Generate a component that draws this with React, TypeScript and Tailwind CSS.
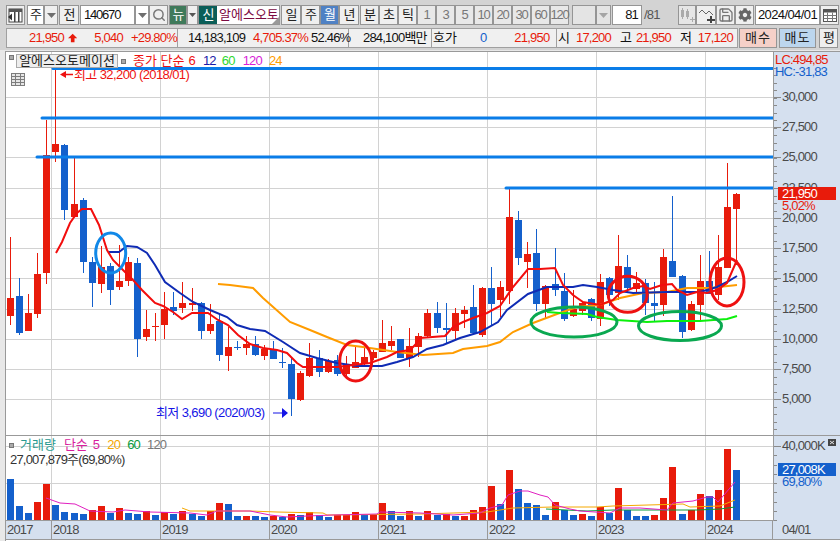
import React from "react";
import { Search, Save } from "lucide-react";
import { FaCog } from "react-icons/fa";

type Candle = [number, number, number, number, "r" | "b"];
const candles: Candle[] = [
  [237,298,316,325,"r"],[278,296,333,335,"b"],[294,313,331,331,"r"],[253,274,314,318,"r"],[120,155,273,284,"r"],
  [68,144,152,162,"r"],[144,145,210,220,"b"],[158,204,217,217,"r"],[198,200,262,273,"b"],[257,262,283,307,"b"],
  [246,267,284,293,"r"],[263,266,290,305,"b"],[245,281,287,290,"r"],[257,262,281,286,"r"],[258,263,339,357,"b"],
  [310,329,337,341,"r"],[313,326,327,341,"r"],[292,309,325,339,"r"],[292,307,311,315,"b"],[282,303,308,313,"r"],
  [288,303,305,311,"r"],[302,303,331,339,"b"],[304,324,331,334,"r"],[314,321,355,361,"b"],[327,347,356,371,"r"],
  [341,347,348,350,"b"],[336,344,348,355,"r"],[336,344,355,356,"b"],[345,349,356,360,"r"],[341,349,359,359,"b"],
  [348,362,363,368,"b"],[357,364,399,416,"b"],[371,373,400,401,"r"],[343,358,376,377,"r"],[350,358,372,377,"b"],
  [359,361,372,373,"r"],[355,360,374,376,"b"],[356,364,374,378,"r"],[347,362,368,367,"r"],[348,357,363,365,"r"],
  [350,352,358,360,"r"],[320,343,352,352,"r"],[326,341,346,350,"r"],[339,339,358,358,"b"],[328,346,358,367,"r"],
  [333,336,347,357,"r"],[309,313,336,337,"r"],[302,313,328,333,"b"],[303,328,330,343,"b"],[308,313,331,340,"r"],
  [306,310,314,328,"r"],[285,307,333,333,"b"],[287,288,335,337,"r"],[267,288,304,325,"b"],[281,287,300,317,"r"],
  [189,217,291,304,"r"],[211,220,258,265,"b"],[242,254,262,288,"r"],[229,253,304,311,"b"],[285,286,304,318,"r"],
  [248,284,290,296,"b"],[273,291,319,321,"b"],[290,309,316,317,"r"],[301,303,311,315,"r"],[298,299,318,321,"b"],
  [274,282,319,326,"r"],[277,278,295,306,"b"],[235,266,293,300,"r"],[255,267,288,293,"b"],[272,283,289,293,"r"],
  [279,283,303,315,"b"],[282,303,306,321,"b"],[249,257,305,316,"r"],[196,261,277,277,"b"],[275,276,332,338,"b"],
  [301,304,330,331,"r"],[255,281,305,320,"r"],[251,281,294,294,"b"],[235,267,295,300,"r"],[163,207,268,268,"r"],
  [193,194,209,265,"r"],
];
const volumes: [number, "r" | "b"][] = [
  [479,"b"],[506,"b"],[513,"b"],[502,"r"],[484,"r"],[505,"b"],[512,"b"],[513,"b"],[514,"b"],[510,"r"],
  [506,"r"],[513,"b"],[508,"r"],[513,"b"],[514,"b"],[511,"r"],[515,"b"],[512,"r"],[514,"b"],[511,"r"],
  [514,"b"],[516,"b"],[511,"r"],[503,"r"],[504,"b"],[516,"b"],[516,"r"],[516,"b"],[517,"b"],[516,"r"],
  [517,"b"],[514,"r"],[515,"b"],[512,"r"],[515,"b"],[517,"b"],[515,"r"],[515,"r"],[512,"r"],[515,"b"],
  [514,"r"],[503,"r"],[511,"b"],[516,"b"],[511,"r"],[516,"b"],[511,"r"],[515,"b"],[514,"r"],[516,"b"],
  [516,"r"],[510,"r"],[507,"r"],[486,"r"],[504,"b"],[470,"r"],[489,"b"],[503,"b"],[505,"b"],[515,"b"],
  [502,"r"],[510,"b"],[515,"b"],[514,"r"],[516,"b"],[507,"r"],[513,"b"],[488,"r"],[510,"b"],[516,"b"],
  [516,"b"],[515,"r"],[498,"r"],[467,"r"],[514,"b"],[510,"r"],[494,"r"],[496,"b"],[490,"r"],[449,"r"],[470,"b"],
];
const ma6 = "56,253 62,242 70,223 77,213 82,209 91,209 99,225 107,250 113,260 125,272 133,280 142,290 150,298 155,303 163,306 173,312 182,319 192,313 208,313 218,320 228,325 238,335 250,344 263,348 277,350 287,353 297,363 303,367 337,367 353,365 370,363 387,357 397,352 410,350 415,345 420,338 445,336 453,327 463,322 473,318 487,313 500,306 513,287 528,269 540,269 555,268 563,285 573,295 583,302 600,305 613,300 620,293 633,288 643,286 650,289 662,285 672,284 677,290 687,295 697,292 707,293 717,290 727,283 737,260";
const ma12 = "109,252 119,252 127,246 137,247 147,253 155,265 165,282 180,293 193,302 210,310 227,317 237,325 250,329 265,331 283,342 300,353 317,358 337,363 357,366 382,366 397,362 413,357 427,349 443,345 460,338 480,332 498,322 507,310 528,294 547,287 573,287 583,285 597,287 613,290 633,293 667,292 700,292 717,287 727,282 737,276";
const ma24 = "218,284 230,285 253,288 263,298 290,322 310,330 327,337 347,345 363,347 397,352 423,355 453,353 463,349 487,346 500,342 513,332 533,323 557,314 577,307 600,305 620,298 643,293 667,292 687,288 710,288 737,285";
const ma60 = "547,312 560,313 587,314 597,317 617,320 647,322 667,321 700,321 727,319 737,316";
const vma5 = "46,498 60,503 75,504 90,511 113,512 125,510 150,512 190,513 207,515 217,511 250,511 270,515 287,517 307,516 333,515 377,514 380,512 420,513 453,515 480,513 490,508 502,505 508,495 520,491 528,491 540,495 548,497 555,505 570,509 580,511 610,513 620,508 640,508 667,510 673,503 693,501 707,497 713,497 718,502 735,482";
const vma20 = "182,508 190,511 250,511 277,512 323,513 327,515 420,514 487,512 513,508 553,507 597,507 613,506 683,504 690,507 720,506 735,500";
const vma60 = "546,509 587,511 613,510 697,510 720,509 735,507";

const RED = "#e81b0b";
const BLUE = "#1460cc";
const gridX = [51.5, 160.5, 269.5, 378.5, 487.5, 596.5, 705.5];
const gridY = [97.5, 127.5, 157.5, 188, 218, 248, 278, 309, 339, 369, 399];
const prices: [string, number][] = [["30,000",96],["27,500",126],["25,000",156],["22,500",186.5],["20,000",217],["17,500",247],["15,000",277],["12,500",307.5],["10,000",338],["7,500",368],["5,000",398]];
const left = (i: number) => Math.round(10.5 + 9.075 * i - 3.5);

const Tri = () => (
  <svg width="9" height="5" viewBox="0 0 9 5"><polygon points="0,0 9,0 4.5,5" fill="#6e6e6e" /></svg>
);
const Btn = ({ w, children, cls = "", bg = "bg-[#efefef]", tc = "text-[#222]" }: { w: string; children?: React.ReactNode; cls?: string; bg?: string; tc?: string }) => (
  <div className={`${w} ${bg} ${tc} h-[20px] shrink-0 flex items-center justify-center border border-[#959595] whitespace-nowrap ${cls}`}>{children}</div>
);
const Num = ({ c = "text-[#e81b0b]", cls = "", children }: { c?: string; cls?: string; children: React.ReactNode }) => (
  <span className={`${c} ${cls} whitespace-pre`}>{children}</span>
);

function PriceChart() {
  return (
    <svg width="767" height="383" viewBox="6 52 767 383" className="block shrink-0 bg-white" fontSize="13" letterSpacing="-0.6">
      {gridX.map((x) => <rect key={x} x={x - 0.5} y={52} width={1} height={383} fill="#d2d2d2" />)}
      {gridY.map((y) => <rect key={y} x={6} y={Math.floor(y)} width={767} height={1} fill="#d2d2d2" />)}
      <g shapeRendering="crispEdges">
        {candles.map(([h, t, b, l, c], i) => (
          <g key={i} fill={c === "r" ? RED : BLUE}>
            <rect x={left(i) + 3} y={h} width={1} height={l - h} />
            <rect x={left(i)} y={t} width={7} height={Math.max(b - t, 1)} />
          </g>
        ))}
      </g>
      <polyline points={ma24} fill="none" stroke="#ff9c00" strokeWidth="2" />
      <polyline points={ma60} fill="none" stroke="#0cf00c" strokeWidth="2" />
      <polyline points={ma12} fill="none" stroke="#0f2bb4" strokeWidth="2" />
      <polyline points={ma6} fill="none" stroke="#f20d0d" strokeWidth="2" />
      <g fill="none" strokeWidth="3">
        <ellipse cx="110.7" cy="253" rx="15" ry="20" stroke="#1088e8" />
        <ellipse cx="355.7" cy="361" rx="16" ry="20" stroke="#ee1111" />
        <ellipse cx="574" cy="322" rx="43" ry="15" stroke="#0aa850" />
        <ellipse cx="627.7" cy="294.3" rx="19.5" ry="18" stroke="#ee1111" />
        <ellipse cx="680" cy="326" rx="41.5" ry="14.5" stroke="#0aa850" />
        <ellipse cx="727" cy="282" rx="17" ry="24" stroke="#ee1111" />
      </g>
      <text x="74" y="79" fill="#ee1111">최고 32,200 (2018/01)</text>
      <path d="M60 74.5 L66 71 L66 73.8 L73 73.8 L73 75.2 L66 75.2 L66 78 Z" fill="#ee1111" />
      <g stroke="#0a7de8" strokeWidth="3" strokeLinecap="round">
        <line x1="53" y1="68.5" x2="773" y2="68.5" />
        <line x1="42" y1="118" x2="773" y2="118" />
        <line x1="37" y1="157" x2="773" y2="157" />
        <line x1="506" y1="188" x2="773" y2="188" />
      </g>
      <text x="156" y="417" fill="#1414e6">최저 3,690 (2020/03)</text>
      <path d="M273 412.5 H282 V408 L288 413 L282 418 V413.5 H273 Z" fill="#1414e6" />
      <g stroke="#7d7d7d" fill="#e6e6e6">
        <rect x="11.5" y="73.5" width="13" height="12" />
        <path d="M11.5 76.5H24.5M11.5 79.5H24.5M11.5 82.5H24.5M15.5 73.5V85.5M20.5 73.5V85.5" fill="none" />
      </g>
    </svg>
  );
}

function VolumeChart() {
  return (
    <svg width="767" height="85" viewBox="6 436 767 85" className="block shrink-0 bg-white">
      {gridX.map((x) => <rect key={x} x={x - 0.5} y={436} width={1} height={85} fill="#d2d2d2" />)}
      <rect x={6} y={446} width={767} height={1} fill="#d2d2d2" />
      <rect x={6} y={483} width={767} height={1} fill="#d2d2d2" />
      <rect x={6} y={520} width={767} height={1} fill="#9a9a9a" />
      <g shapeRendering="crispEdges">
        {volumes.map(([t, c], i) => <rect key={i} x={left(i)} y={t} width={7} height={520 - t} fill={c === "r" ? RED : BLUE} />)}
      </g>
      <polyline points={vma60} fill="none" stroke="#0a9a3c" strokeWidth="1" />
      <polyline points={vma20} fill="none" stroke="#f5a800" strokeWidth="1" />
      <polyline points={vma5} fill="none" stroke="#e020c0" strokeWidth="1" />
    </svg>
  );
}

function PriceAxis() {
  const ticks: number[] = [];
  for (let y = 67.5; y < 432; y += 7.54) ticks.push(Math.round(y));
  return (
    <svg width="67" height="383" viewBox="773 52 67 383" className="block shrink-0 bg-[#d5e0ef]" fontSize="13" letterSpacing="-0.8">
      <rect x="773" y="52" width="1" height="383" fill="#9a9a9a" />
      {ticks.map((y) => <rect key={y} x="774" y={y} width="3" height="1" fill="#8a8a8a" />)}
      {gridY.map((y) => <rect key={y} x="774" y={Math.floor(y)} width="7" height="1" fill="#8a8a8a" />)}
      <text x="775" y="64" fill="#e81b0b">LC:494,85</text>
      <text x="775" y="76" fill="#1460cc">HC:-31,83</text>
      {prices.map(([p, y]) => <text key={p} x="782" y={y + 5} fill="#4a4a4a">{p}</text>)}
      <rect x="778" y="187" width="58" height="13" fill={RED} />
      <text x="782" y="198" fill="#fff">21,950</text>
      <text x="782" y="210" fill="#e81b0b">5,02%</text>
    </svg>
  );
}

function VolumeAxis() {
  return (
    <svg width="67" height="85" viewBox="773 436 67 85" className="block shrink-0 bg-[#d5e0ef]" fontSize="13" letterSpacing="-0.8">
      <rect x="773" y="436" width="1" height="85" fill="#9a9a9a" />
      {[446, 455, 465, 474, 483, 492, 502, 511, 520].map((y) => <rect key={y} x="774" y={y} width={y === 446 ? 7 : 3} height="1" fill="#8a8a8a" />)}
      <text x="782" y="450" fill="#4a4a4a">40,000K</text>
      <rect x="828" y="439" width="8" height="7" fill="#444" />
      <path d="M830 441l4 3M834 441l-4 3" stroke="#fff" strokeWidth="0.8" />
      <rect x="778" y="463" width="58" height="13" fill={BLUE} />
      <text x="782" y="474" fill="#fff">27,008K</text>
      <text x="782" y="486" fill="#1460cc">69,80%</text>
    </svg>
  );
}

export default function App() {
  const years: [string, string][] = [["2017", "w-[46px]"], ["2018", "w-[109px]"], ["2019", "w-[109px]"], ["2020", "w-[109px]"], ["2021", "w-[109px]"], ["2022", "w-[109px]"], ["2023", "w-[109px]"], ["2024", "w-[67px]"]];
  return (
    <div className="w-[840px] h-[541px] overflow-hidden flex flex-col bg-[#d3d3d3] text-[13px] tracking-[-0.8px] [font-family:'Liberation_Sans','Noto_Sans_CJK_KR',sans-serif]">
      {/* toolbar */}
      <div className="h-[28px] pt-[5px] pl-[6px] flex items-start shrink-0">
        <Btn w="w-[19px]">
          <svg width="15" height="15" viewBox="0 0 15 15"><rect x="1" y="1" width="13" height="13" fill="#fff" stroke="#444" /><rect x="1" y="1" width="13" height="3" fill="#555" /><rect x="6" y="4" width="1.5" height="10" fill="#444" /><rect x="10" y="4" width="1.5" height="10" fill="#444" /><polygon points="0,9 4,5.5 4,12.5" fill="#333" /></svg>
        </Btn>
        <div className="w-[2px]" />
        <Btn w="w-[17px]" bg="bg-white">주</Btn>
        <Btn w="w-[14px]"><Tri /></Btn>
        <div className="w-[1px]" />
        <Btn w="w-[20px]">전</Btn>
        <div className="w-[1px]" />
        <div className="w-[55px] h-[20px] shrink-0 border border-[#959595] bg-white pl-[3px] flex items-center text-[#111] tracking-[-1.2px]">140670</div>
        <Btn w="w-[14px]" bg="bg-white"><Tri /></Btn>
        <Btn w="w-[19px]"><Search size={14} color="#777" strokeWidth={2.5} /></Btn>
        <div className="w-[1px]" />
        <div className="w-[18px] h-[20px] shrink-0 border border-[#959595] bg-[#3f7a5a] text-white flex items-center justify-center">뉴</div>
        <Btn w="w-[11px]"><svg width="7" height="4" viewBox="0 0 7 4"><polygon points="0,0 7,0 3.5,4" fill="#555" /></svg></Btn>
        <div className="w-[82px] h-[20px] shrink-0 border border-[#959595] bg-white flex items-center relative">
          <div className="w-[18px] h-full bg-[#0b5e58] text-white flex items-center justify-center">신</div>
          <span className="ml-[2px] text-[#7c0a42] tracking-normal whitespace-nowrap">알에스오토</span>
          <div className="absolute right-0 bottom-0 w-0 h-0 border-l-[7px] border-l-transparent border-b-[7px] border-b-[#999]" />
        </div>
        <div className="w-[1px]" />
        <Btn w="w-[20px]">일</Btn>
        <Btn w="w-[19px]">주</Btn>
        <Btn w="w-[19px]" bg="bg-[#4f81c4]" tc="text-white">월</Btn>
        <Btn w="w-[20px]">년</Btn>
        <div className="w-[1px]" />
        <Btn w="w-[19px]">분</Btn>
        <Btn w="w-[19px]">초</Btn>
        <Btn w="w-[19px]">틱</Btn>
        {["1", "3", "5", "10", "20", "30", "60", "120"].map((n) => (
          <Btn key={n} w="w-[19px]" bg="bg-[#e8e8e8]" tc="text-[#777]" cls="tracking-[-1.2px]">{n}</Btn>
        ))}
        <div className="w-[3px]" />
        <Btn w="w-[24px]" bg="bg-[#e4e4e4]" />
        <Btn w="w-[15px]" bg="bg-[#e4e4e4]"><svg width="9" height="5" viewBox="0 0 9 5"><polygon points="0,0 9,0 4.5,5" fill="#a5a5a5" /></svg></Btn>
        <div className="w-[1px]" />
        <div className="w-[30px] h-[20px] shrink-0 border border-[#959595] bg-white flex items-center justify-end pr-[3px] text-[#111]">81</div>
        <span className="w-[36px] h-[20px] pl-[2px] flex items-center text-[#555]">/81</span>
        <Btn w="w-[18px]" bg="bg-[#e6e6e6]">
          <svg width="16" height="16" viewBox="0 0 16 16" fill="#aaa"><rect x="2" y="3" width="3" height="7" /><rect x="3" y="1" width="1" height="11" /><rect x="7" y="4" width="3" height="6" /><rect x="8" y="2" width="1" height="10" /><path d="M11 12h2v-2h1v2h2v1h-2v2h-1v-2h-2z" /></svg>
        </Btn>
        <Btn w="w-[20px]">
          <svg width="17" height="16" viewBox="0 0 17 16" fill="none"><path d="M1 6 L4 3 L8 7 L11 4 L15 8" stroke="#666" strokeWidth="1" /><path d="M9 12h3v-3h2v3h3v2h-3v2h-2v-2H9z" fill="#444" /></svg>
        </Btn>
        <Btn w="w-[19px]"><Save size={16} color="#777" strokeWidth={2} /></Btn>
        <Btn w="w-[19px]"><FaCog size={14} color="#666" /></Btn>
        <div className="w-[1px]" />
        <div className="w-[65px] h-[20px] shrink-0 border border-[#959595] bg-white flex items-center justify-center text-[#111] whitespace-nowrap tracking-[-0.6px]">2024/04/01</div>
        <Btn w="w-[19px]">
          <svg width="14" height="13" viewBox="0 0 14 13"><rect x="0.5" y="0.5" width="13" height="12" fill="#fff" stroke="#555" /><rect x="0.5" y="0.5" width="13" height="3" fill="#555" /><path d="M0.5 6.5H13.5M0.5 9.5H13.5M4.5 3.5V12.5M9.5 3.5V12.5" stroke="#777" /></svg>
        </Btn>
      </div>
      {/* quote row */}
      <div className="h-[22px] pl-[6px] flex items-start shrink-0">
        <div className="w-[732px] h-[20px] shrink-0 border border-[#a0a0a0] bg-[#f0f0f0] flex items-center">
          <div className="w-[171px] h-full shrink-0 border-r border-[#a0a0a0] flex items-center pl-[22px]">
            <Num>21,950</Num>
            <svg width="13" height="12" viewBox="0 0 13 12" className="ml-[4px]"><polygon points="6.5,0 13,6.5 9,6.5 9,12 4,12 4,6.5 0,6.5" fill="#e81b0b" /></svg>
            <Num cls="ml-[17px]">5,040</Num>
            <Num cls="ml-[8px]">+29.80%</Num>
          </div>
          <div className="w-[171px] h-full shrink-0 border-r border-[#a0a0a0] flex items-center pl-[10px]">
            <Num c="text-[#111]">14,183,109</Num>
            <Num cls="ml-[8px]">4,705.37%</Num>
            <Num c="text-[#111]" cls="ml-[3px]">52.46%</Num>
          </div>
          <div className="w-[83px] h-full shrink-0 border-r border-[#a0a0a0] flex items-center pl-[14px] overflow-hidden">
            <Num c="text-[#111]">284,100백만</Num>
          </div>
          <div className="w-[125px] h-full shrink-0 border-r border-[#a0a0a0] flex items-center pl-[1px]">
            <Num c="text-[#111]" cls="tracking-normal">호가</Num>
            <Num c="text-[#1460cc]" cls="ml-[23px]">0</Num>
            <Num cls="ml-[28px]">21,950</Num>
          </div>
          <div className="flex-1 h-full flex items-center pl-[1px]">
            <Num c="text-[#111]" cls="tracking-normal">시</Num>
            <Num cls="ml-[6px]">17,200</Num>
            <Num c="text-[#111]" cls="ml-[9px] tracking-normal">고</Num>
            <Num cls="ml-[4px]">21,950</Num>
            <Num c="text-[#111]" cls="ml-[9px] tracking-normal">저</Num>
            <Num cls="ml-[6px]">17,120</Num>
          </div>
        </div>
        <div className="w-[1px]" />
        <Btn w="w-[38px]" bg="bg-[#f5d0c8]" cls="tracking-[1px]">매수</Btn>
        <div className="w-[2px]" />
        <Btn w="w-[37px]" bg="bg-[#bcd6ee]" cls="tracking-[1px]">매도</Btn>
        <div className="w-[3px]" />
        <Btn w="w-[19px]">평</Btn>
      </div>
      {/* chart */}
      <div className="flex-1 pl-[5px] bg-[#e8e8e8] pt-[1px] flex">
        <div className="flex-1 flex flex-col border-l border-t border-[#999] bg-white">
          <div className="flex relative">
            <PriceChart />
            <PriceAxis />
            <div className="absolute left-[3px] top-[3px] w-[5px] h-[5px] bg-[#aaa] border border-[#777]" />
            <div className="absolute left-[10px] top-[2px] w-[102px] h-[14px] flex items-center justify-center border border-[#aaa] bg-[#eee] text-[#222] tracking-normal whitespace-nowrap">알에스오토메이션</div>
            <div className="absolute left-[115px] top-[2px] h-[14px] flex items-center whitespace-nowrap">
              <div className="w-[5px] h-[5px] bg-[#aaa] border border-[#777]" />
              <span className="ml-[7px] text-[#ee1111] tracking-normal">종가 단순</span>
              <span className="ml-[4px] text-[#ee1111]">6</span>
              <span className="ml-[8px] text-[#1a1aa8]">12</span>
              <span className="ml-[6px] text-[#2fd82f]">60</span>
              <span className="ml-[8px] text-[#d81ed8]">120</span>
              <span className="ml-[7px] text-[#ff9c00]">24</span>
            </div>
          </div>
          <div className="h-[1px] bg-[#999] shrink-0" />
          <div className="flex relative">
            <VolumeChart />
            <VolumeAxis />
            <div className="absolute left-[3px] top-[2px] flex items-center h-[14px] whitespace-nowrap">
              <div className="w-[5px] h-[5px] bg-[#aaa] border border-[#777]" />
              <span className="ml-[6px] text-[#2a9a90] tracking-normal">거래량</span>
              <span className="ml-[8px] text-[#d81e9e] tracking-normal">단순</span>
              <span className="ml-[5px] text-[#d81e9e]">5</span>
              <span className="ml-[8px] text-[#f5a800]">20</span>
              <span className="ml-[7px] text-[#0a9a3c]">60</span>
              <span className="ml-[7px] text-[#777]">120</span>
            </div>
            <div className="absolute left-[4px] top-[14px] text-[#333] whitespace-nowrap">27,007,879주(69,80%)</div>
          </div>
          <div className="h-[19px] flex bg-[#d5e0ef] text-[#4a4a4a] border-b border-[#999] shrink-0">
            {years.map(([y, w]) => (
              <div key={y} className={`${w} shrink-0 border-r border-[#999] pl-[1px] flex items-center`}>{y}</div>
            ))}
            <div className="pl-[9px] flex items-center">04/01</div>
          </div>
        </div>
      </div>
    </div>
  );
}
